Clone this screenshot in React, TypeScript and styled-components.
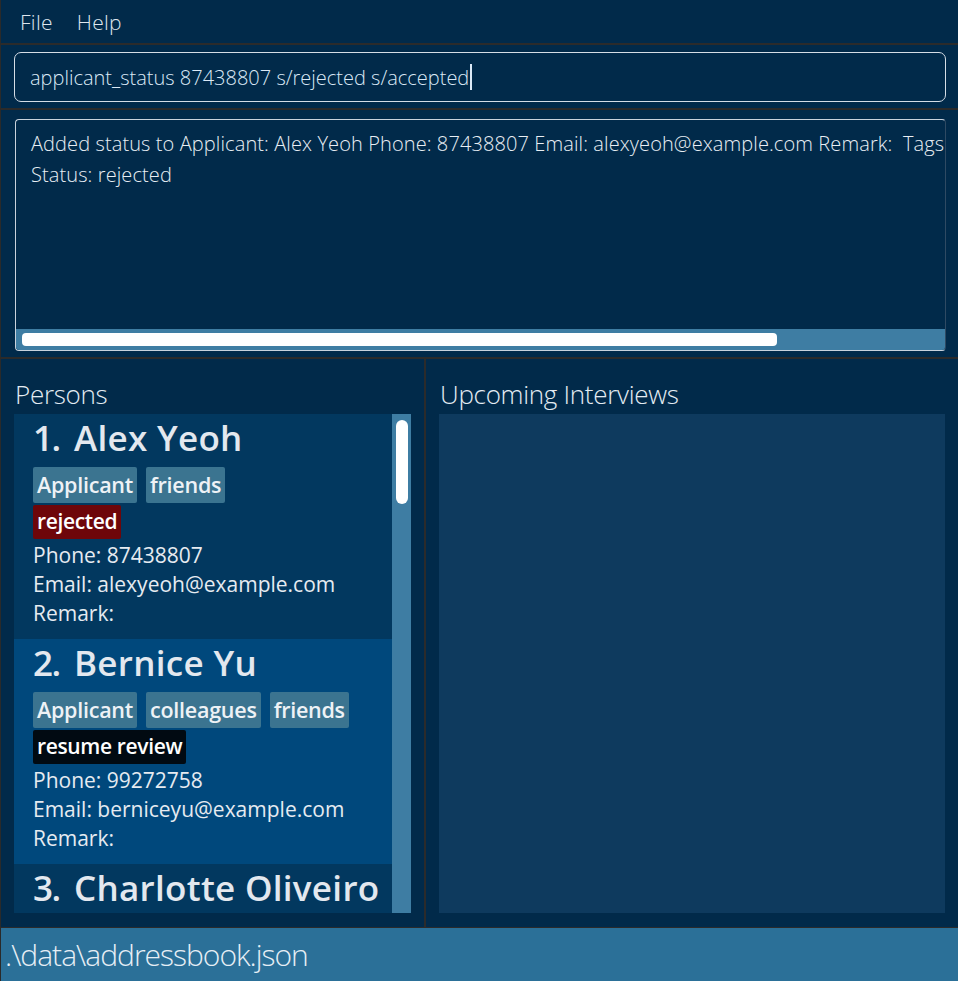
import React from "react";
import styled, { createGlobalStyle } from "styled-components";

const GlobalStyle = createGlobalStyle`
  html, body { margin: 0; padding: 0; background: #012a4a; }
  body { font-family: "Open Sans", "Noto Sans", sans-serif; }
  * { box-sizing: border-box; }
`;

const Window = styled.div`
  width: 958px;
  height: 981px;
  display: flex;
  flex-direction: column;
  background: #012a4a;
  border-left: 1px solid #2a2a2a;
  overflow: hidden;
`;

const MenuBar = styled.div`
  height: 43px;
  flex: none;
  display: flex;
  align-items: center;
  gap: 24px;
  padding-left: 19px;
  font-weight: 300;
  font-size: 21px;
  color: #dfe6ee;
`;

const MenuItem = styled.span`
  letter-spacing: 0.3px;
`;

const Section = styled.div<{ $pt: number; $pb: number; $pl: number; $pr: number }>`
  flex: none;
  border-top: 2px solid #2b2b2b;
  padding: ${(p) => `${p.$pt}px ${p.$pr}px ${p.$pb}px ${p.$pl}px`};
`;

const CommandBox = styled.div`
  height: 50px;
  border: 1.5px solid #d5dde6;
  border-radius: 7px;
  display: flex;
  align-items: center;
  padding-left: 15px;
  font-weight: 300;
  font-size: 20px;
  color: #dbe9f6;
  white-space: pre;
`;

const Caret = styled.span`
  display: inline-block;
  width: 1.5px;
  height: 26px;
  background: #dbe9f6;
  margin-left: 1px;
`;

const ResultBox = styled.div`
  height: 232px;
  border: 1px solid #c9d2dc;
  border-right-color: #2f4a63;
  border-radius: 4px;
  display: flex;
  flex-direction: column;
  overflow: hidden;
`;

const ResultText = styled.div`
  flex: 1;
  padding: 8px 0 0 15px;
  font-weight: 300;
  font-size: 20px;
  line-height: 31px;
  color: #e8eef4;
  white-space: pre;
  overflow: hidden;
  letter-spacing: 0.1px;
`;

const HScrollTrack = styled.div`
  height: 21px;
  flex: none;
  background: #3e7da3;
  padding: 4px 0 3px 6px;
`;

const HScrollThumb = styled.div`
  height: 13px;
  width: 755px;
  background: #ffffff;
  border-radius: 4px;
`;

const Split = styled.div`
  flex: 1;
  display: flex;
  border-top: 2px solid #2b2b2b;
  min-height: 0;
`;

const Pane = styled.div<{ $w?: number; $border?: boolean }>`
  ${(p) => (p.$w ? `width: ${p.$w}px; flex: none;` : "flex: 1;")}
  ${(p) => (p.$border ? "border-right: 2px solid #2b2b2b;" : "")}
  display: flex;
  flex-direction: column;
  padding: 17px 13px 14px 13px;
`;

const PaneTitle = styled.div`
  height: 38px;
  flex: none;
  font-weight: 300;
  font-size: 26px;
  color: #e4ecf3;
  padding-left: 1px;
  letter-spacing: -0.3px;
  line-height: 36px;
`;

const ListFrame = styled.div`
  flex: 1;
  display: flex;
  min-height: 0;
  overflow: hidden;
`;

const Cards = styled.div`
  flex: 1;
  overflow: hidden;
`;

const VScrollTrack = styled.div`
  width: 19px;
  flex: none;
  background: #3e7da3;
  padding: 6px 3px 0 4px;
`;

const VScrollThumb = styled.div`
  height: 84px;
  background: #ffffff;
  border-radius: 6px;
`;

const Card = styled.div<{ $alt: boolean }>`
  height: 225px;
  background: ${(p) => (p.$alt ? "#00487c" : "#02385f")};
  padding: 1px 0 0 19px;
  color: #e6ebf1;
`;

const Name = styled.div`
  font-weight: 600;
  font-size: 35px;
  line-height: 46px;
  height: 52px;
  color: #e3e8ef;
  white-space: nowrap;
  letter-spacing: 0.3px;
`;

const Index = styled.span`
  display: inline-block;
  width: 41px;
  letter-spacing: -1.5px;
`;

const TagRow = styled.div`
  display: flex;
  gap: 9px;
  margin-bottom: 2px;
`;

const Tag = styled.span<{ $bg: string }>`
  background: ${(p) => p.$bg};
  height: 36px;
  line-height: 35px;
  padding: 0 4px;
  border-radius: 2px;
  font-weight: 600;
  font-size: 21.5px;
  color: #eef2f6;
  letter-spacing: -0.25px;
  white-space: nowrap;
`;

const StatusTag = styled(Tag)`
  height: 34px;
  line-height: 32px;
  font-size: 21px;
  letter-spacing: -0.35px;
  color: #ffffff;
`;

const Field = styled.div`
  font-size: 21px;
  line-height: 29px;
  color: #e6ebf1;
`;

const InterviewList = styled.div`
  flex: 1;
  background: #0e3a5e;
`;

const StatusBar = styled.div`
  height: 54px;
  flex: none;
  border-top: 1px solid #2b2b2b;
  background: #2b7098;
  display: flex;
  align-items: center;
  padding-left: 4px;
  font-weight: 300;
  font-size: 30px;
  line-height: 40px;
  color: #e6eef5;
  letter-spacing: -1px;
`;

type Person = {
  name: string;
  tags: string[];
  status: { label: string; color: string };
  phone: string;
  email: string;
};

const people: Person[] = [
  {
    name: "Alex Yeoh",
    tags: ["Applicant", "friends"],
    status: { label: "rejected", color: "#6e060a" },
    phone: "87438807",
    email: "alexyeoh@example.com",
  },
  {
    name: "Bernice Yu",
    tags: ["Applicant", "colleagues", "friends"],
    status: { label: "resume review", color: "#010a12" },
    phone: "99272758",
    email: "berniceyu@example.com",
  },
  {
    name: "Charlotte Oliveiro",
    tags: ["Applicant", "neighbours"],
    status: { label: "resume review", color: "#010a12" },
    phone: "93210283",
    email: "charlotte@example.com",
  },
];

export default function App() {
  return (
    <>
      <GlobalStyle />
      <Window>
        <MenuBar>
          <MenuItem>File</MenuItem>
          <MenuItem>Help</MenuItem>
        </MenuBar>
        <Section $pt={7} $pb={6} $pl={13} $pr={12}>
          <CommandBox>
            applicant_status 87438807 s/rejected s/accepted
            <Caret />
          </CommandBox>
        </Section>
        <Section $pt={9} $pb={6} $pl={14} $pr={12}>
          <ResultBox>
            <ResultText>
              {"Added status to Applicant: Alex Yeoh Phone: 87438807 Email: alexyeoh@example.com Remark:  Tags: [Applicant][friends]\nStatus: rejected"}
            </ResultText>
            <HScrollTrack>
              <HScrollThumb />
            </HScrollTrack>
          </ResultBox>
        </Section>
        <Split>
          <Pane $w={425} $border>
            <PaneTitle>Persons</PaneTitle>
            <ListFrame>
              <Cards>
                {people.map((p, i) => (
                  <Card key={p.name} $alt={i % 2 === 1}>
                    <Name>
                      <Index>{i + 1}.</Index>
                      {p.name}
                    </Name>
                    <TagRow>
                      {p.tags.map((t) => (
                        <Tag key={t} $bg="#3b7490">
                          {t}
                        </Tag>
                      ))}
                    </TagRow>
                    <TagRow>
                      <StatusTag $bg={p.status.color}>{p.status.label}</StatusTag>
                    </TagRow>
                    <Field>Phone: {p.phone}</Field>
                    <Field>Email: {p.email}</Field>
                    <Field>Remark:</Field>
                  </Card>
                ))}
              </Cards>
              <VScrollTrack>
                <VScrollThumb />
              </VScrollTrack>
            </ListFrame>
          </Pane>
          <Pane>
            <PaneTitle>Upcoming Interviews</PaneTitle>
            <InterviewList />
          </Pane>
        </Split>
        <StatusBar>.\data\addressbook.json</StatusBar>
      </Window>
    </>
  );
}
